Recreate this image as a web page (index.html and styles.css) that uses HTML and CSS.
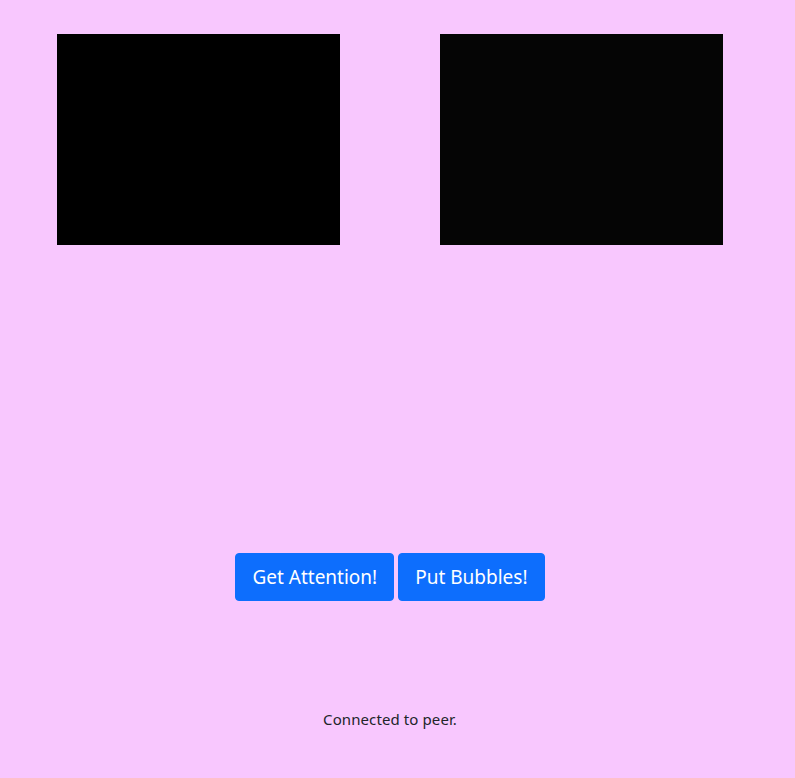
FILE: index.html
```html
<!DOCTYPE html>
<html>
<head>
<meta charset="utf-8">
<link rel="stylesheet" href="styles.css">
</head>
<body>
<div class="page">
  <div class="videos">
    <div class="video local"></div>
    <div class="video remote"></div>
  </div>
  <div class="actions">
    <button class="btn">Get Attention!</button>
    <button class="btn">Put Bubbles!</button>
  </div>
  <p class="status">Connected to peer.</p>
</div>
</body>
</html>
```

FILE: styles.css
```css
html, body {
  margin: 0;
  padding: 0;
  background: #f8c7fe;
  height: 100%;
}
body {
  font-family: "Noto Sans", "Open Sans", sans-serif;
  color: #212529;
  overflow: hidden;
}
.page {
  width: 780px;
  box-sizing: border-box;
  padding: 34px 8px 0;
}
.videos {
  display: grid;
  grid-template-columns: 283px 283px;
  column-gap: 100px;
  justify-content: center;
}
.video {
  width: 283px;
  height: 211px;
  background: #000;
}
.remote {
  background: #050505;
}
.actions {
  margin-top: 308px;
  display: flex;
  justify-content: center;
  gap: 4px;
}
.btn {
  font-family: "Noto Sans", sans-serif;
  font-size: 19px;
  line-height: 30px;
  padding: 8px 16px;
  border: 1px solid #0d6efd;
  background: #0d6efd;
  color: #fff;
  border-radius: 4px;
  cursor: pointer;
}
.status {
  margin: 106px 0 0;
  text-align: center;
  font-size: 15px;
  line-height: 24px;
  letter-spacing: 0.1px;
}
```
